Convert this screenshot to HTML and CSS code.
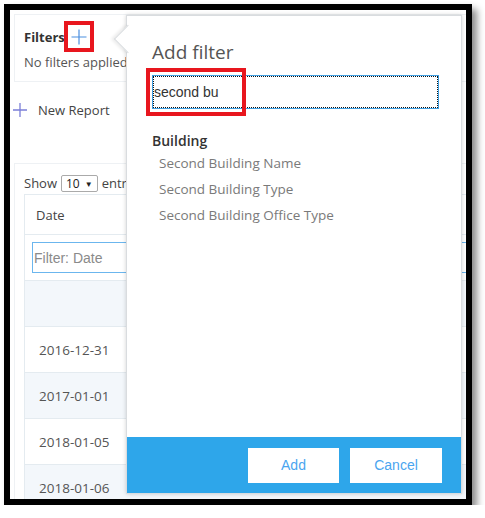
FILE: index.html
```html
<!DOCTYPE html>
<html>
<head>
<meta charset="utf-8">
<link rel="stylesheet" href="styles.css">
</head>
<body>
<div class="frame">
  <div class="screen">
    <div class="filters-card">
      <div class="filters-title">
        <span class="filters-label">Filters</span>
        <span class="add-filter">
          <svg width="16" height="16" viewBox="0 0 16 16"><path d="M8 0.5V15.5M0.5 8H15.5" stroke="#4b8fe0" stroke-width="1.2" fill="none"/></svg>
          <span class="mark mark-plus"></span>
        </span>
      </div>
      <div class="filters-empty">No filters applied</div>
    </div>

    <div class="toolbar">
      <span class="tb-item">
        <svg width="14" height="14" viewBox="0 0 14 14"><path d="M7 0V14M0 7H14" stroke="#7b7fd8" stroke-width="1.3" fill="none"/></svg>
        <span>New Report</span>
      </span>
      <span class="tb-next"></span>
    </div>

    <div class="report-card">
      <div class="length">Show <span class="select">10 <span class="caret">▼</span></span> entries</div>
      <table class="grid">
        <thead>
          <tr class="head"><th class="c-date">Date</th><th></th></tr>
          <tr class="filter-row"><td colspan="2"><input class="col-filter" placeholder="Filter: Date"></td></tr>
        </thead>
        <tbody>
          <tr class="odd blank"><td></td><td></td></tr>
          <tr><td>2016-12-31</td><td></td></tr>
          <tr class="odd"><td>2017-01-01</td><td></td></tr>
          <tr><td>2018-01-05</td><td></td></tr>
          <tr class="odd"><td>2018-01-06</td><td></td></tr>
        </tbody>
      </table>
    </div>

    <div class="popover">
      <span class="arrow"></span>
      <div class="pop-body">
        <h2 class="pop-title">Add filter</h2>
        <div class="search">
          <input class="search-input" value="second bu">
          <span class="mark mark-search"></span>
        </div>
        <div class="group">Building</div>
        <ul class="options">
          <li>Second Building Name</li>
          <li>Second Building Type</li>
          <li>Second Building Office Type</li>
        </ul>
      </div>
      <div class="pop-footer">
        <button class="btn">Add</button>
        <button class="btn">Cancel</button>
      </div>
    </div>
  </div>
</div>
</body>
</html>
```

FILE: styles.css
```css
* { box-sizing: border-box; }
html, body { margin: 0; padding: 0; background: #fff; }
body { font-family: "Open Sans", "Noto Sans", sans-serif; font-size: 13px; color: #555; }

.frame {
  margin: 4px 0 0 4px;
  width: 468px;
  height: 501px;
  border: 6px solid #000;
  box-shadow: 5px 5px 7px rgba(0,0,0,0.45);
}
.screen {
  position: relative;
  width: 456px;
  height: 489px;
  overflow: hidden;
  background: #fff;
}

/* Filters card */
.filters-card {
  margin: 4px 0 0 4px;
  height: 68px;
  border: 1px solid #eef1f4;
  border-right: none;
  padding: 10px 0 0 9px;
}
.filters-title { display: flex; align-items: center; height: 24px; }
.filters-label { font-weight: 700; color: #333; font-size: 13px; }
.add-filter { position: relative; display: inline-flex; margin-left: 6px; }
.filters-empty { margin-top: 4px; font-size: 13px; color: #555; }

.mark { position: absolute; border: 4px solid #e8161e; }
.mark-plus { left: -7px; top: -8px; width: 30px; height: 31px; }

/* toolbar */
.toolbar { display: flex; align-items: center; height: 30px; margin-top: 13px; padding-left: 3px; }
.tb-item { display: inline-flex; align-items: center; gap: 11px; color: #444; font-size: 13px; }
.tb-next { margin-left: 28px; width: 2px; height: 15px; background: #a9acea; }

/* report card */
.report-card {
  margin: 38px 0 0 4px;
  border-top: 1px solid #eef1f4;
  border-left: 1px solid #eef1f4;
  padding: 9px 0 0 9px;
}
.length { display: flex; align-items: center; gap: 4px; height: 20px; color: #444; font-size: 13px; }
.select {
  display: inline-flex; align-items: center; gap: 5px;
  height: 17px; padding: 0 4px; border: 1px solid #aaa; border-radius: 2px;
  font-size: 12px; color: #222; background: #fff;
}
.caret { font-size: 8px; }

.grid {
  margin-top: 1px;
  width: 520px;
  border-collapse: collapse;
  border: 1px solid #e4ebf0;
}
.grid th, .grid td { border-top: 1px solid #e4ebf0; text-align: left; font-weight: 400; padding: 0 0 0 11px; }
.grid .head th { height: 40px; color: #444; font-size: 13px; }
.c-date { width: 100px; }
.filter-row td { height: 46px; padding: 0 0 0 7px; }
.col-filter {
  display: block;
  width: 480px; height: 31px;
  border: 1px solid #6bb6ee;
  font-family: "Liberation Sans", Arial, sans-serif; font-size: 14px;
  padding: 0 0 0 1px; color: #333; outline: none;
}
.col-filter::placeholder { color: #8a8a8a; }
.grid tbody td { height: 46px; color: #555; font-size: 13.5px; padding-left: 14px; }
.grid tbody tr.odd td { background: #f3f7fb; }

/* popover */
.popover {
  position: absolute;
  left: 116px; top: 5px;
  width: 336px; height: 479px;
  background: #fff;
  border: 1px solid #d9dcdf;
  box-shadow: 0 0 4px rgba(0,0,0,0.18);
  display: flex; flex-direction: column;
}
.arrow {
  position: absolute;
  left: -9px; top: 13px;
  width: 20px; height: 20px;
  background: #fff;
  border-left: 1px solid #d9dcdf;
  border-bottom: 1px solid #d9dcdf;
  transform: rotate(45deg);
  box-shadow: -2px 2px 3px rgba(0,0,0,0.08);
}
.pop-body { position: relative; flex: 1; padding: 22px 0 0 25px; }
.pop-title { margin: 0; font-weight: 400; font-size: 19px; color: #555; line-height: 28px; }
.search { position: relative; margin-top: 9px; width: 287px; }
.search-input {
  display: block; width: 287px; height: 34px;
  border: 1px solid #3f9fe2;
  outline: 1px dotted #111; outline-offset: -2px;
  font-family: "Liberation Sans", Arial, sans-serif; font-size: 14px; color: #333;
  padding: 0 0 0 1px;
}
.mark-search { left: -6px; top: -7px; width: 100px; height: 48px; }
.group { margin-top: 22px; font-weight: 600; color: #333; font-size: 14px; line-height: 20px; }
.options { list-style: none; margin: -1px 0 0 0; padding: 0 0 0 7px; }
.options li { line-height: 26px; color: #7a7a7a; font-size: 13.5px; }

.pop-footer {
  height: 56px; background: #2ea6ea;
  display: flex; justify-content: flex-end; align-items: center;
  gap: 11px; padding: 0 19px 0 0;
}
.btn {
  width: 91px; height: 35px;
  background: #fff; border: none;
  font-family: "Liberation Sans", Arial, sans-serif; font-size: 14px;
  color: #4aa5ef;
}
.btn + .btn { width: 92px; }
```
